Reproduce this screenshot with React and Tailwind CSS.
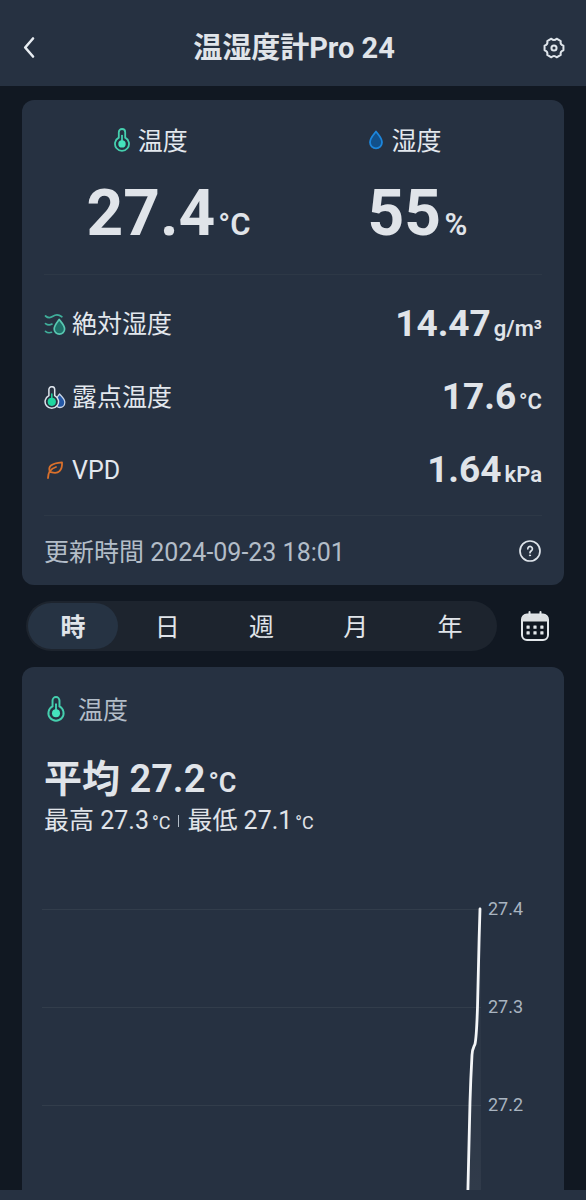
import { useState } from 'react';

const metrics = [
  { label: '絶対湿度', value: '14.47', unit: 'g/m³', icon: AbsoluteHumidityIcon },
  { label: '露点温度', value: '17.6', unit: '°C', icon: DewPointIcon },
  { label: 'VPD', value: '1.64', unit: 'kPa', icon: LeafIcon },
];

const periods = ['時', '日', '週', '月', '年'];

const ticks = ['27.4', '27.3', '27.2'];

function ThermometerIcon({ className }) {
  return (
    <svg viewBox="0 0 16 24" fill="none" className={className} aria-hidden="true">
      <path
        d="M4.8 9.6V4.2a3.2 3.2 0 0 1 6.400 0v5.400a7 7 0 1 1-6.400 0Z"
        stroke="#45cfae"
        strokeWidth="1.8"
      />
      <path d="M8 7.500V16" stroke="#45e3bd" strokeWidth="1.600" strokeLinecap="round" />
      <circle cx="8" cy="15.900" r="3.700" fill="#45e3bd" />
    </svg>
  );
}

function DropIcon({ className }) {
  return (
    <svg viewBox="0 0 16 20" fill="none" className={className} aria-hidden="true">
      <path
        d="M8 1.500C5.800 4.400 2 8 2 12.300a6 6 0 0 0 12 0C14 8 10.200 4.400 8 1.500Z"
        fill="#12508a"
        stroke="#1c86dc"
        strokeWidth="1.8"
        strokeLinejoin="round"
      />
    </svg>
  );
}

function AbsoluteHumidityIcon({ className }) {
  return (
    <svg viewBox="0 0 22 24" fill="none" className={className} aria-hidden="true">
      <g stroke="#3fae9a" strokeWidth="1.7" strokeLinecap="round">
        <path d="M1.500 3C4 5.200 6.500 5 9 3.300s5.500-2 8.800.5" />
        <path d="M1.500 10.600c2.200 1.700 4.200 1.800 6.500.5" />
        <path d="M1.500 18.300c1.900 1.600 3.800 1.800 6 1" />
      </g>
      <path
        d="M15.200 6.500c-2 2.900-5 5.600-5 9.500a5.200 5.200 0 0 0 10.400 0c0-3.900-3.300-6.600-5.400-9.500Z"
        fill="#1f6f68"
        stroke="#58c7b1"
        strokeWidth="1.7"
        strokeLinejoin="round"
      />
    </svg>
  );
}

function DewPointIcon({ className }) {
  return (
    <svg viewBox="0 0 22 24" fill="none" className={className} aria-hidden="true">
      <path
        d="M15.500 8c-1.600 2.300-4.300 4.700-4.300 8.300 0 3.100 2 5.200 4.700 5.200s4.900-2.100 4.900-5.200c0-3.600-3.500-6-5.300-8.300Z"
        fill="#2458a6"
        stroke="#c9d6e8"
        strokeWidth="1.3"
        strokeLinejoin="round"
      />
      <path
        d="M4.900 9.600V3.600a2.900 2.900 0 0 1 5.800 0v6a6.700 6.700 0 1 1-5.800 0Z"
        fill="#263141"
        stroke="#dde4ec"
        strokeWidth="1.5"
      />
      <path d="M7.800 8v8" stroke="#1fd6a0" strokeWidth="1.5" strokeLinecap="round" />
      <circle cx="7.800" cy="15.800" r="4.100" fill="#1fd6a0" />
    </svg>
  );
}

function LeafIcon({ className }) {
  return (
    <svg
      viewBox="0 0 22 24"
      fill="none"
      stroke="#d9702b"
      strokeWidth="1.8"
      strokeLinecap="round"
      strokeLinejoin="round"
      className={className}
      aria-hidden="true"
    >
      <path d="M6 13.200C3.600 7.500 7 4.300 18 3.300c.3 3.400-.6 6.800-2.500 8.900-1.900 2-4.800 2.100-8.500 1" />
      <path d="M12 8c-4.800 1.600-8 4.600-8 11" />
    </svg>
  );
}

function BackIcon() {
  return (
    <svg viewBox="0 0 14 24" fill="none" className="h-6 w-[14px]" aria-hidden="true">
      <path d="M10 2.500 2.200 11.500l7.800 9" stroke="#e8edf2" strokeWidth="2.6" strokeLinecap="round" strokeLinejoin="round" />
    </svg>
  );
}

function GearIcon() {
  return (
    <svg viewBox="0 0 24 24" fill="none" stroke="#dfe5eb" strokeWidth="2.2" strokeLinejoin="round" className="size-[22px] overflow-visible" aria-hidden="true">
      <path d="M22.290 9.440V14.560Q18.400 15.700 19.360 19.620L14.920 22.190Q12 19.400 9.080 22.190L4.640 19.620Q5.600 15.700 1.710 14.560V9.440Q5.600 8.300 4.640 4.380L9.080 1.810Q12 4.600 14.920 1.810L19.360 4.380Q18.400 8.300 22.290 9.440Z" />
      <circle cx="12" cy="12" r="2.800" />
    </svg>
  );
}

function HelpIcon() {
  return (
    <svg viewBox="0 0 24 24" fill="none" stroke="#dfe5eb" strokeLinecap="round" className="size-6" aria-hidden="true">
      <circle cx="12" cy="12" r="10" strokeWidth="1.7" />
      <path d="M9.800 9.800a2.300 2.300 0 1 1 3.700 1.800c-.9.700-1.500 1.100-1.500 2.100" strokeWidth="1.7" />
      <circle cx="12" cy="16.400" r=".6" fill="#dfe5eb" strokeWidth="1" />
    </svg>
  );
}

function CalendarIcon() {
  return (
    <svg viewBox="0 0 28 32" fill="none" className="h-8 w-7" aria-hidden="true">
      <rect x="1" y="4.500" width="26" height="25.500" rx="5" stroke="#e3e7eb" strokeWidth="2" />
      <path d="M1 11.500V9A4.500 4.500 0 0 1 5.500 4.500h17A4.500 4.500 0 0 1 27 9v2.500Z" fill="#dcdfe2" />
      <path d="M8.500 2v4M19.500 2v4" stroke="#e3e7eb" strokeWidth="2" strokeLinecap="round" />
      <g fill="#e3e7eb">
        <rect x="5.500" y="15.500" width="3.200" height="3.200" rx=".5" />
        <rect x="12.400" y="15.500" width="3.200" height="3.200" rx=".5" />
        <rect x="19.300" y="15.500" width="3.200" height="3.200" rx=".5" />
        <rect x="5.500" y="21.200" width="3.200" height="3.200" rx=".5" />
        <rect x="12.400" y="21.200" width="3.200" height="3.200" rx=".5" />
        <rect x="19.300" y="21.200" width="3.200" height="3.200" rx=".5" />
      </g>
    </svg>
  );
}

// the label is centred over the number only, the unit hangs to its right
function Reading({ label, value, unit, icon: Icon, iconClass }) {
  return (
    <div className="grid grid-cols-[auto_auto] items-baseline justify-center gap-x-[3px]">
      <div className="flex h-10 items-center justify-center gap-2 text-[25px] text-[#e3e8ee]">
        <Icon className={iconClass} />
        <span className="pt-1">{label}</span>
      </div>
      <span />
      <p className="mt-[22px] h-16 text-[64px] leading-[64px] font-bold">{value}</p>
      <span className="text-[31px] leading-8 font-semibold">{unit}</span>
    </div>
  );
}

function TemperatureChart() {
  return (
    <div className="mt-[58px] -ml-[2px] flex h-[330px] gap-[7px]">
      {/* plot area, the curve is anchored to the right edge (now) */}
      <svg className="h-full min-w-0 flex-1 overflow-visible" role="img" aria-label="温度">
        <defs>
          <linearGradient id="area" x1="0" y1="0" x2="0" y2="1">
            <stop offset="0" stopColor="#fff" stopOpacity="0.01" />
            <stop offset="1" stopColor="#fff" stopOpacity="0.05" />
          </linearGradient>
        </defs>
        {ticks.map((t, i) => (
          <line key={t} x1="0" x2="100%" y1={12.5 + i * 98} y2={12.5 + i * 98} stroke="#323d4b" />
        ))}
        <svg x="100%" overflow="visible">
          <path
            d="M-1 12C-2 45-3 80-3.500 110c-.7 22-1.200 31-2.500 37-1 3-2.600 4-3 11-1 18-1.500 30-2 47L-13.500 310H0V12Z"
            fill="url(#area)"
          />
          <path
            d="M-1 12C-2 45-3 80-3.500 110c-.7 22-1.200 31-2.500 37-1 3-2.600 4-3 11-1 18-1.500 30-2 47L-13.500 310"
            fill="none"
            stroke="#f4f6f8"
            strokeWidth="2.8"
            strokeLinecap="round"
          />
        </svg>
      </svg>
      <div className="flex w-[54px] flex-col text-lg leading-6 text-[#a9b4c0]">
        {ticks.map(t => (
          <span key={t} className="h-[98px] shrink-0">{t}</span>
        ))}
      </div>
    </div>
  );
}

export default function App() {
  const [period, setPeriod] = useState('時');

  return (
    <div className="flex h-screen flex-col bg-[#111822] font-[Roboto,'Noto_Sans_CJK_JP',sans-serif] text-[#e0e4e9]" lang="ja">
      <header className="flex shrink-0 items-center justify-between bg-[#263141] px-[21px] pt-7 pb-[18px]">
        <button type="button" aria-label="戻る" className="flex w-6 pl-[2px]">
          <BackIcon />
        </button>
        <h1 className="text-[29px] leading-10 font-bold">温湿度計Pro 24</h1>
        <button type="button" aria-label="設定">
          <GearIcon />
        </button>
      </header>

      <main className="min-h-0 flex-1 overflow-hidden px-[22px] pt-[14px]">
        {/* Current values */}
        <section className="rounded-xl bg-[#263141] px-[22px] pt-5">
          <div className="grid grid-cols-2">
            <Reading label="温度" value="27.4" unit="°C" icon={ThermometerIcon} iconClass="h-6 w-4" />
            <Reading label="湿度" value="55" unit="%" icon={DropIcon} iconClass="h-5 w-4" />
          </div>

          <dl className="mt-7 border-y border-[#2d3846] pt-[13px] pb-2">
            {metrics.map(({ label, value, unit, icon: Icon }) => (
              <div key={label} className="flex h-[73px] items-center justify-between">
                <dt className="flex items-center gap-[6px] text-[25px] text-[#e3e8ee]">
                  <Icon className="h-6 w-[22px]" />
                  {label}
                </dt>
                <dd className="flex items-baseline gap-[3px] pt-1 text-[37px] leading-10 font-bold">
                  {value}
                  <span className="text-[22px] font-semibold">{unit}</span>
                </dd>
              </div>
            ))}
          </dl>

          <div className="flex h-[69px] items-center justify-between text-[25px] text-[#b3bdc8]">
            <p className="pt-1">更新時間 2024-09-23 18:01</p>
            <button type="button" aria-label="ヘルプ">
              <HelpIcon />
            </button>
          </div>
        </section>

        {/* Period switch */}
        <div className="mt-4 flex items-center gap-6 pr-[15px] pl-1">
          <div className="grid h-[50px] flex-1 grid-cols-5 rounded-full bg-[#1d242e]">
            {periods.map(p => (
              <button
                key={p}
                type="button"
                aria-pressed={p === period}
                onClick={() => setPeriod(p)}
                className={`m-[2px] rounded-full pt-1 text-[25px] leading-8 ${p === period ? 'bg-[#263343] font-bold' : ''}`}
              >
                {p}
              </button>
            ))}
          </div>
          <button type="button" aria-label="カレンダー">
            <CalendarIcon />
          </button>
        </div>

        {/* Temperature history */}
        <section className="mt-4 rounded-xl bg-[#263141] px-[22px] pt-[22px]">
          <h2 className="flex h-10 items-center gap-[10px] text-[25px] text-[#b3bdc8]">
            <ThermometerIcon className="h-[26px] w-6" />
            <span className="pt-1">温度</span>
          </h2>
          <p className="mt-[26px] flex h-12 items-baseline gap-[3px] text-[38px] leading-[48px] font-semibold">
            平均 27.2
            <span className="text-[27px]">°C</span>
          </p>
          <p className="flex h-9 items-baseline gap-[3px] text-[25px] leading-9">
            最高 27.3
            <span className="text-[18px]">°C</span>
            <span className="mx-[5px] h-3 w-px self-center bg-[#b3bdc8]" />
            最低 27.1
            <span className="text-[18px]">°C</span>
          </p>
          <TemperatureChart />
        </section>
      </main>

      <div className="h-[10px] shrink-0 bg-[#263141]" />
    </div>
  );
}
